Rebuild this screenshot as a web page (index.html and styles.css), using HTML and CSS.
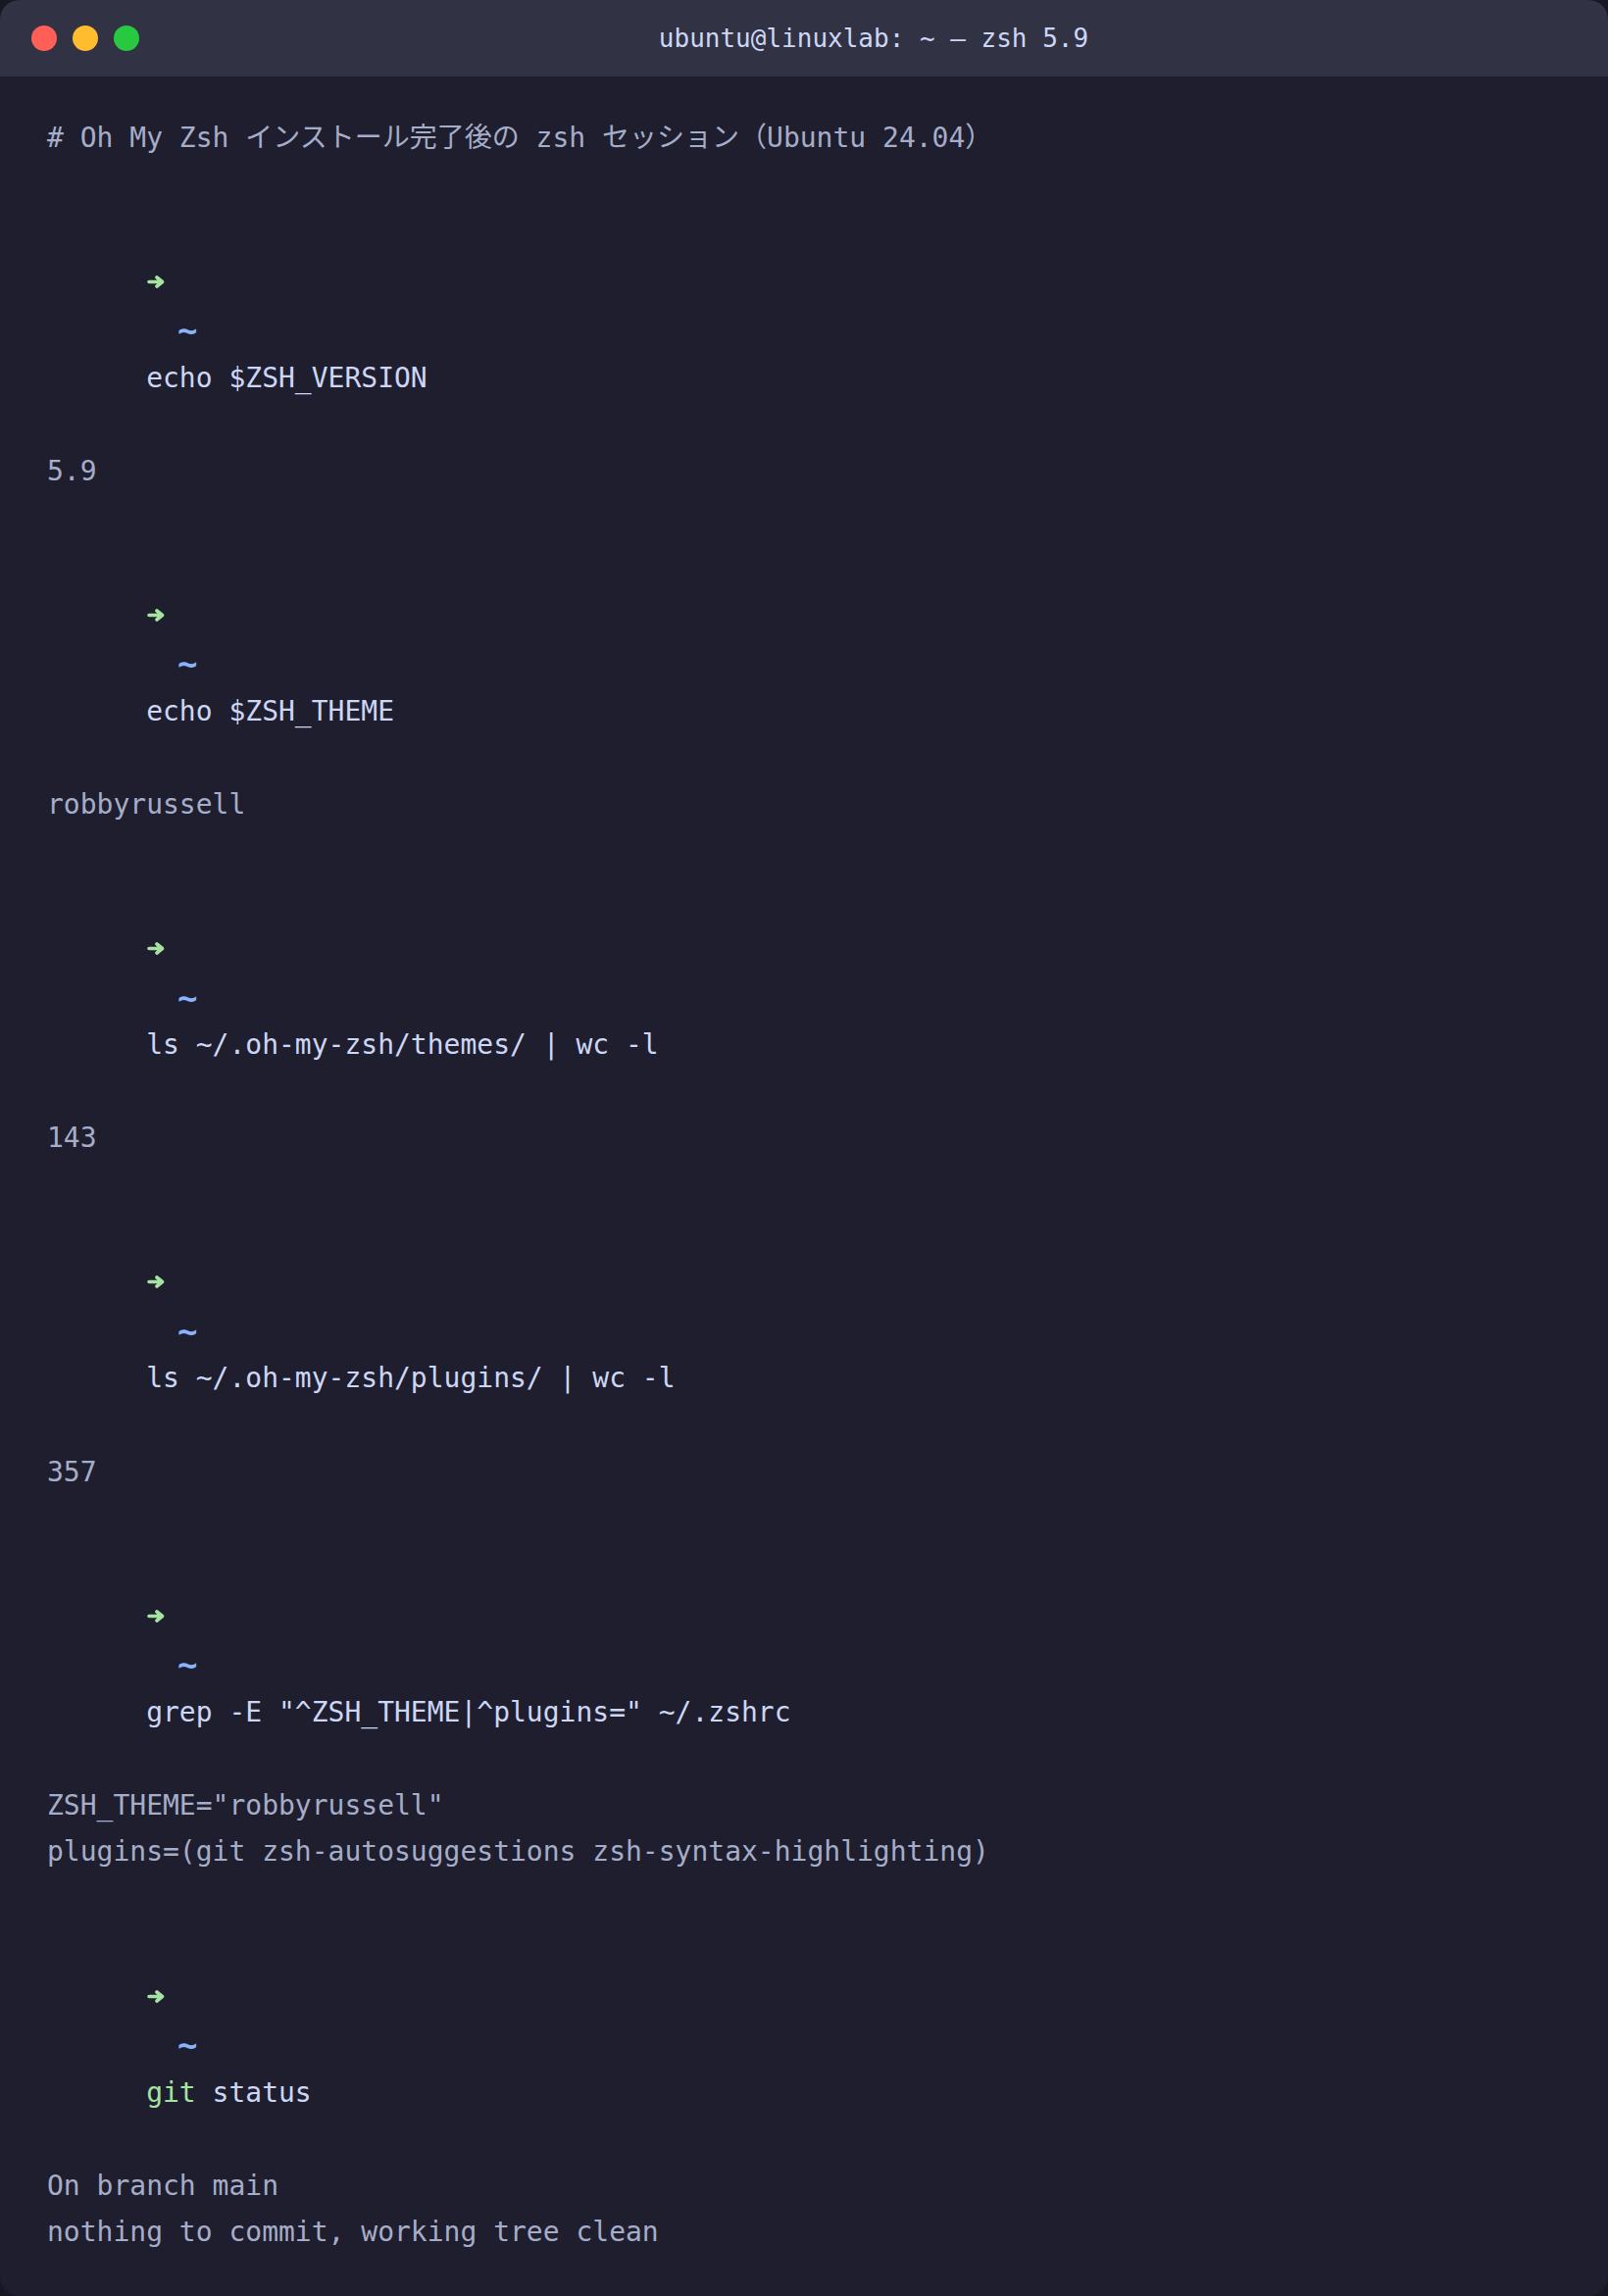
FILE: index.html
```
<!DOCTYPE html>
<html lang="ja">
<head>
<meta charset="utf-8">
<title>ubuntu@linuxlab: ~ — zsh 5.9</title>
<link rel="stylesheet" href="styles.css">
</head>
<body>
<div class="window">
  <div class="titlebar">
    <div class="lights">
      <span class="light red"></span>
      <span class="light yellow"></span>
      <span class="light green"></span>
    </div>
    <div class="title">ubuntu@linuxlab: ~ — zsh 5.9</div>
  </div>
  <div class="term">
    <div class="line comment"># Oh My Zsh インストール完了後の zsh セッション（Ubuntu 24.04）</div>

    <div class="entry">
      <div class="arrow"><svg viewBox="0 0 18 13" width="18" height="13"><path d="M2 6.5H13M10 2L15.5 6.5L10 11" /></svg></div>
      <div class="cwd">~</div>
      <div class="cmd">echo $ZSH_VERSION</div>
      <div class="output">
        <div class="line">5.9</div>
      </div>
    </div>

    <div class="entry">
      <div class="arrow"><svg viewBox="0 0 18 13" width="18" height="13"><path d="M2 6.5H13M10 2L15.5 6.5L10 11" /></svg></div>
      <div class="cwd">~</div>
      <div class="cmd">echo $ZSH_THEME</div>
      <div class="output">
        <div class="line">robbyrussell</div>
      </div>
    </div>

    <div class="entry">
      <div class="arrow"><svg viewBox="0 0 18 13" width="18" height="13"><path d="M2 6.5H13M10 2L15.5 6.5L10 11" /></svg></div>
      <div class="cwd">~</div>
      <div class="cmd">ls ~/.oh-my-zsh/themes/ | wc -l</div>
      <div class="output">
        <div class="line">143</div>
      </div>
    </div>

    <div class="entry">
      <div class="arrow"><svg viewBox="0 0 18 13" width="18" height="13"><path d="M2 6.5H13M10 2L15.5 6.5L10 11" /></svg></div>
      <div class="cwd">~</div>
      <div class="cmd">ls ~/.oh-my-zsh/plugins/ | wc -l</div>
      <div class="output">
        <div class="line">357</div>
      </div>
    </div>

    <div class="entry">
      <div class="arrow"><svg viewBox="0 0 18 13" width="18" height="13"><path d="M2 6.5H13M10 2L15.5 6.5L10 11" /></svg></div>
      <div class="cwd">~</div>
      <div class="cmd">grep -E "^ZSH_THEME|^plugins=" ~/.zshrc</div>
      <div class="output">
        <div class="line">ZSH_THEME="robbyrussell"</div>
        <div class="line">plugins=(git zsh-autosuggestions zsh-syntax-highlighting)</div>
      </div>
    </div>

    <div class="entry">
      <div class="arrow"><svg viewBox="0 0 18 13" width="18" height="13"><path d="M2 6.5H13M10 2L15.5 6.5L10 11" /></svg></div>
      <div class="cwd">~</div>
      <div class="cmd"><span class="git">git</span> status</div>
      <div class="output">
        <div class="line">On branch main</div>
        <div class="line">nothing to commit, working tree clean</div>
      </div>
    </div>
  </div>
</div>
</body>
</html>
```

FILE: styles.css
```
html, body {
  margin: 0;
  padding: 0;
  background: #181825;
}

.window {
  width: 1640px;
  height: 2342px;
  background: #1e1e2e;
  border-radius: 20px;
  overflow: hidden;
  font-family: "DejaVu Sans Mono", "Noto Sans CJK JP", monospace;
}

.titlebar {
  height: 78px;
  background: #313244;
  display: flex;
  align-items: center;
  padding-left: 32px;
}

.lights {
  display: flex;
  gap: 16px;
}

.light {
  width: 26px;
  height: 26px;
  border-radius: 50%;
  display: block;
}

.red { background: #ff5f57; }
.yellow { background: #febc2e; }
.green { background: #28c840; }

.title {
  flex: 1;
  text-align: center;
  font-size: 26px;
  color: #cdd6f4;
  white-space: pre;
}

.term {
  padding: 38.5px 48px 0;
  font-size: 28px;
  line-height: 47.6px;
  color: #cdd6f4;
}

.line {
  white-space: pre;
}

.comment {
  color: #a6adc8;
}

.entry {
  margin-top: 102.3px;
}

.arrow {
  height: 47.6px;
  display: flex;
  align-items: center;
  padding-left: 102px;
}

.arrow svg {
  display: block;
  margin-top: -6px;
  fill: none;
  stroke: #a6e3a1;
  stroke-width: 3.6;
  stroke-linecap: round;
  stroke-linejoin: round;
}

.cwd {
  padding-left: 133px;
  font-size: 34px;
  color: #89b4fa;
  font-weight: bold;
}

.cmd {
  padding-left: 6ch;
  white-space: pre;
  color: #cdd6f4;
}

.git {
  color: #a6e3a1;
}

.output {
  margin-top: 47.6px;
  color: #a6adc8;
}
```
